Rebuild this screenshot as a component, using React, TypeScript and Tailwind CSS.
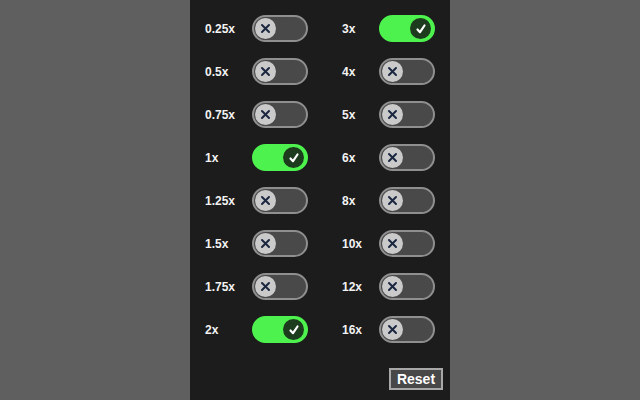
import React, { useState } from "react";

// Speed picker — two columns of labelled toggles in a dark panel, Reset at the bottom.

const LEFT = ["0.25x", "0.5x", "0.75x", "1x", "1.25x", "1.5x", "1.75x", "2x"];
const RIGHT = ["3x", "4x", "5x", "6x", "8x", "10x", "12x", "16x"];
const DEFAULT_ON = ["1x", "2x", "3x"];

function Toggle({ on, onClick }: { on: boolean; onClick: () => void }) {
    return (
        <button
            onClick={onClick}
            className={[
                "flex shrink-0 items-center w-[56px] h-[27px] rounded-full border-2 px-px",
                on ? "bg-[#4ef24e] border-[#4ef24e] justify-end pr-[2px]" : "bg-[#494949] border-[#8f8f8f] justify-start",
            ].join(" ")}
        >
            {on ? (
                <span className="flex items-center justify-center w-[21px] h-[21px] rounded-full bg-[#1d3b1d]">
                    <svg width="12" height="12" viewBox="0 0 12 12" fill="none">
                        <path d="M2.5 6.5 L5 9.2 L9.5 2.5" stroke="#fff" strokeWidth="2.2" strokeLinecap="round" strokeLinejoin="round" />
                    </svg>
                </span>
            ) : (
                <span className="flex items-center justify-center w-[21px] h-[21px] rounded-full bg-[#cacaca]">
                    <svg width="11" height="11" viewBox="0 0 11 11" fill="none">
                        <path d="M2 2 L9 9 M9 2 L2 9" stroke="#1b2740" strokeWidth="2" strokeLinecap="round" />
                    </svg>
                </span>
            )}
        </button>
    );
}

export default function App() {
    const [on, setOn] = useState<string[]>(DEFAULT_ON);
    const flip = (s: string) => setOn((p) => (p.includes(s) ? p.filter((x) => x !== s) : [...p, s]));

    return (
        <div className="w-[640px] h-[400px] bg-[#5f5f5f] flex justify-center" style={{ fontFamily: '"Liberation Sans", Arial, sans-serif' }}>
            <div className="w-[260px] h-full bg-[#1c1c1c] flex flex-col pt-[15px] pl-[15px] pr-[7px]">
                <div className="flex flex-col gap-[16px]">
                    {LEFT.map((a, i) => {
                        const b = RIGHT[i];
                        return (
                            <div key={a} className="flex items-center">
                                <div className="flex items-center w-[137px] shrink-0">
                                    <span className="w-[47px] text-[12px] font-bold text-[#f2f2f2]">{a}</span>
                                    <Toggle on={on.includes(a)} onClick={() => flip(a)} />
                                </div>
                                <div className="flex items-center">
                                    <span className="w-[37px] text-[12px] font-bold text-[#f2f2f2]">{b}</span>
                                    <Toggle on={on.includes(b)} onClick={() => flip(b)} />
                                </div>
                            </div>
                        );
                    })}
                </div>
                <div className="flex justify-end mt-[25px]">
                    <button
                        onClick={() => setOn(DEFAULT_ON)}
                        className="w-[54px] h-[22px] bg-[#484848] border-2 border-[#a8a8a8] text-[14px] font-bold text-white leading-none"
                    >
                        Reset
                    </button>
                </div>
            </div>
        </div>
    );
}
